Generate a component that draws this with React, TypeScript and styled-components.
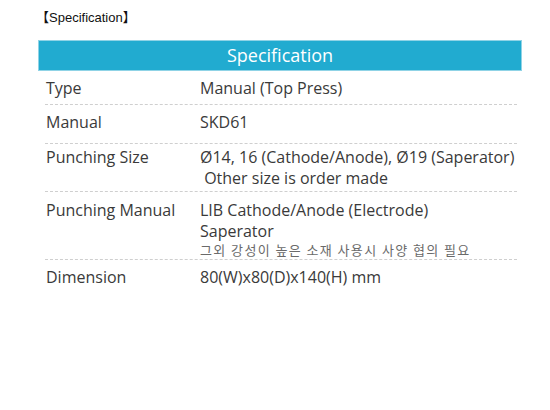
import styled, { createGlobalStyle } from "styled-components";

const GlobalStyle = createGlobalStyle`
  body {
    margin: 0;
    background: #fff;
  }
`;

type Row = {
  label: string;
  lines: string[];
  note?: string;
  pad: [number, number];
};

const rows: Row[] = [
  { label: "Type", lines: ["Manual (Top Press)"], pad: [7, 5] },
  { label: "Manual", lines: ["SKD61"], pad: [7, 10] },
  {
    label: "Punching Size",
    lines: ["Ø14, 16 (Cathode/Anode), Ø19 (Saperator)", "\u00a0Other size is order made"],
    pad: [3, 2],
  },
  {
    label: "Punching Manual",
    lines: ["LIB Cathode/Anode (Electrode)", "Saperator"],
    note: "그외 강성이 높은 소재 사용시 사양 협의 필요",
    pad: [8, 1],
  },
  { label: "Dimension", lines: ["80(W)x80(D)x140(H) mm"], pad: [7, 0] },
];

export default function App() {
  return (
    <>
      <GlobalStyle />
      <Page>
        <Caption>【Specification】</Caption>
        <Table>
          <HeaderBar>Specification</HeaderBar>
          <Body>
            {rows.map((row, i) => (
              <SpecRow key={row.label} $top={row.pad[0]} $bottom={row.pad[1]} $last={i === rows.length - 1}>
                <Label>{row.label}</Label>
                <Value>
                  {row.lines.map((line) => (
                    <Line key={line}>{line}</Line>
                  ))}
                  {row.note && <Note>{row.note}</Note>}
                </Value>
              </SpecRow>
            ))}
          </Body>
        </Table>
      </Page>
    </>
  );
}

const Page = styled.div`
  width: 550px;
  height: 410px;
  padding: 10px 28px 0 38px;
  box-sizing: border-box;
`;

const Caption = styled.div`
  font-family: "Liberation Sans", "Noto Sans CJK KR", sans-serif;
  font-size: 13px;
  line-height: 16px;
  color: #111;
  margin-left: -2px;
  margin-bottom: 14px;
`;

const Table = styled.div`
  width: 484px;
`;

const HeaderBar = styled.div`
  height: 31px;
  background: #21abd0;
  border: 1px solid #8fd3e6;
  box-sizing: border-box;
  color: #fff;
  font-family: "Open Sans", sans-serif;
  font-size: 18px;
  line-height: 29px;
  text-align: center;
`;

const Body = styled.div`
  padding: 0 5px 0 7px;
`;

const SpecRow = styled.div<{ $top: number; $bottom: number; $last: boolean }>`
  display: flex;
  padding: ${(p) => p.$top}px 0 ${(p) => p.$bottom}px 1px;
  border-bottom: ${(p) => (p.$last ? "none" : "1px dashed #cfcfcf")};
  font-family: "Open Sans", sans-serif;
  font-size: 16px;
  line-height: 21px;
  color: #3a3a3a;
`;

const Label = styled.div`
  width: 154px;
  flex-shrink: 0;
`;

const Value = styled.div`
  display: flex;
  flex-direction: column;
`;

const Line = styled.div`
  white-space: pre;
`;

const Note = styled.div`
  font-family: "Noto Sans CJK KR", sans-serif;
  font-size: 13px;
  letter-spacing: 1.4px;
  line-height: 16px;
  color: #6a6a6a;
`;
